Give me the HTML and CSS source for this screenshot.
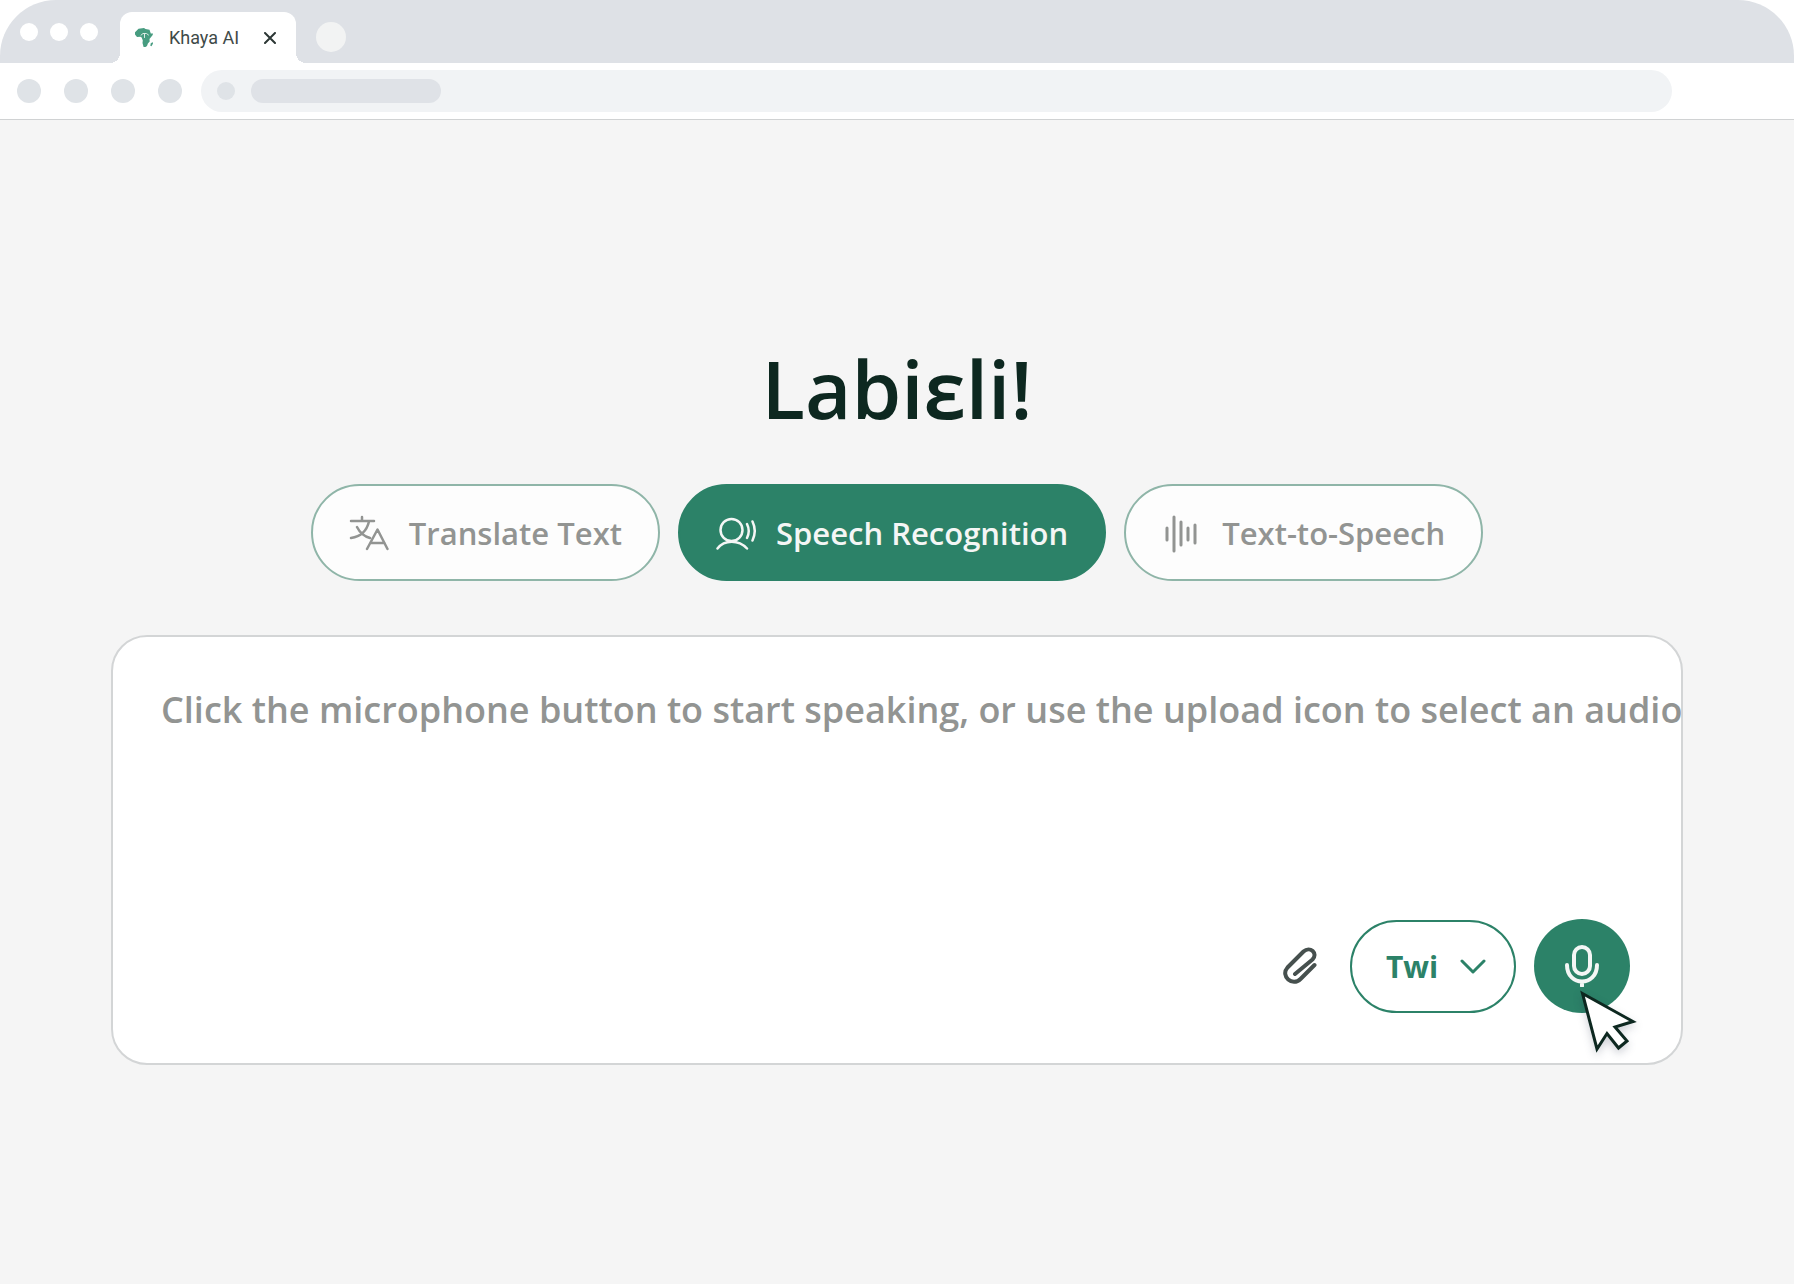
FILE: index.html
```html
<!DOCTYPE html>
<html lang="en">
<head>
    <meta charset="UTF-8">
    <meta name="viewport" content="width=device-width, initial-scale=1.0">
    <title>Khaya AI</title>
    <link rel="stylesheet" href="styles.css">
</head>
<body>
    <header class="browser">
        <div class="tab-strip">
            <div class="window-dots">
                <span></span><span></span><span></span>
            </div>
            <div class="tab">
                <svg class="favicon" viewBox="0 0 18 19" aria-hidden="true">
                    <path fill="#479c80" d="M3.500.8 9 0l1.500 1 4 .8 1.300 3.700H18l-.3 1.500-3.200 4 .2 2.500-1.800 2-.9 2.500-1.500 1H8.600L7.500 15l.3-2.500L6.700 9.500 5.500 8.700 2 9 0 6.500V4.200z"/>
                    <path fill="#479c80" d="m17.500 14 .5 1.500-1.500 2.700-1.200-.5.5-2.200z"/>
                    <path fill="none" stroke="#dcebe5" d="M6 7.200 8 5.500h3.500L13.500 7M9.500 6v3.500" stroke-width="1"/>
                </svg>
                <span class="tab-title">Khaya AI</span>
                <button class="tab-close" aria-label="Close tab">
                    <svg viewBox="0 0 12 12"><path d="M1 1 11 11M11 1 1 11"/></svg>
                </button>
            </div>
            <button class="new-tab" aria-label="New tab"></button>
        </div>
        <div class="toolbar">
            <div class="nav-dots">
                <span></span><span></span><span></span><span></span>
            </div>
            <div class="address-bar">
                <span class="site-icon"></span>
                <span class="site-url"></span>
            </div>
        </div>
    </header>

    <main class="page">
        <h1>Labiɛli!</h1>

        <nav class="modes">
            <button class="mode">
                <svg viewBox="0 0 40 40">
                    <path d="M2 8h23M13 4v4M20 8.500C18 17 12 23.500 2 25M8 14C11 20 15 23.500 21 25M18 36 28.500 16.500 38.500 36M21.500 30h14"/>
                </svg>
                Translate Text
            </button>
            <button class="mode active">
                <svg viewBox="0 0 40 40">
                    <circle cx="15.500" cy="17" r="11"/>
                    <path d="M1.500 35.500C8.500 26.500 22.500 26.500 31 35.500M31 11Q34.500 18 31 25M36.500 8.500Q41 18 36.500 27.500"/>
                </svg>
                Speech Recognition
            </button>
            <button class="mode">
                <svg viewBox="0 0 40 40">
                    <path class="bars" d="M5 15v12M12 4v34M19 9v23M26 15v12M33 12v18"/>
                </svg>
                Text-to-Speech
            </button>
        </nav>

        <section class="recorder">
            <input class="prompt" type="text" aria-label="Transcript" placeholder="Click the microphone button to start speaking, or use the upload icon to select an audio">
            <div class="actions">
                <button class="attach" aria-label="Upload audio">
                    <svg viewBox="0 0 34 38">
                        <path d="M31.500 18 17.500 32C9.500 40 -3 29 4.500 20.500L20.500 4.500C27 -1.500 35.500 6.500 29.500 12.500L12 27"/>
                    </svg>
                </button>
                <div class="language">
                    <select aria-label="Language">
                        <option>Twi</option>
                    </select>
                    <svg viewBox="0 0 26 16"><path d="M2 2 13 13 24 2"/></svg>
                </div>
                <div class="mic-wrap">
                    <button class="mic" aria-label="Start speaking">
                        <svg viewBox="0 0 34 42">
                            <rect x="9" y="2" width="16" height="27" rx="8"/>
                            <path d="M2 20C2 42 32 42 32 20M17 37v4"/>
                        </svg>
                    </button>
                    <svg class="cursor" viewBox="0 0 60 66">
                        <path d="M2.500 3.500 53 31.500 35 37 47 51 38.500 58 27 43.500 17 59z"/>
                    </svg>
                </div>
            </div>
        </section>
    </main>
</body>
</html>
```

FILE: styles.css
```css
* { margin: 0; padding: 0; box-sizing: border-box; }
body {
    min-height: 100vh;
    background: #f5f5f5;
    font-family: "Open Sans", "Noto Sans", sans-serif;
    font-weight: 600;
}
button, select, input { font: inherit; border: none; background: none; }
button { cursor: pointer; }
svg {
    display: block;
    fill: none;
    stroke: currentColor;
    stroke-width: 2;
    stroke-linecap: round;
    stroke-linejoin: round;
}

/* Browser chrome */
.browser {
    background: #fff;
    border-bottom: 1px solid #d0d2d3;
}
.tab-strip {
    display: flex;
    height: 63px;
    padding: 12px 20px 0;
    border-radius: 56px 56px 0 0;
    background: #dee1e6;
}
.window-dots {
    display: flex;
    gap: 12px;
    padding-top: 11px;
    width: 100px;
}
.window-dots span {
    width: 18px;
    height: 18px;
    border-radius: 50%;
    background: #fff;
}
.tab {
    position: relative;
    display: flex;
    align-items: center;
    width: 176px;
    padding: 0 20px 0 15px;
    border-radius: 12px 12px 0 0;
    background: #fff;
}
.tab::before, .tab::after {
    content: "";
    position: absolute;
    bottom: 0;
    width: 10px;
    height: 10px;
}
.tab::before { right: 100%; background: radial-gradient(circle at 0 0, #dee1e6 10px, #fff 10px); }
.tab::after { left: 100%; background: radial-gradient(circle at 100% 0, #dee1e6 10px, #fff 10px); }
.favicon {
    width: 18px;
    height: 19px;
    stroke: none;
}
.tab-title {
    margin-left: 16px;
    font-family: Roboto, sans-serif;
    font-size: 18px;
    font-weight: 400;
    color: #3f4a48;
}
.tab-close {
    margin-left: auto;
    color: #2c3735;
}
.tab-close svg { width: 12px; height: 12px; }
.new-tab {
    width: 30px;
    height: 30px;
    margin: 10px 0 0 20px;
    border-radius: 50%;
    background: #f2f3f3;
}
.toolbar {
    display: flex;
    align-items: center;
    height: 56px;
    padding: 0 122px 0 17px;
}
.nav-dots {
    display: flex;
    gap: 23px;
    margin-right: 19px;
}
.nav-dots span {
    width: 24px;
    height: 24px;
    border-radius: 50%;
    background: #dfe3e7;
}
.address-bar {
    display: flex;
    flex: 1;
    align-items: center;
    gap: 16px;
    height: 42px;
    padding: 0 16px;
    border-radius: 21px;
    background: #f1f3f5;
}
.site-icon {
    width: 18px;
    height: 18px;
    border-radius: 50%;
    background: #dfe3e7;
}
.site-url {
    width: 190px;
    height: 24px;
    border-radius: 12px;
    background: #dfe2e7;
}

/* Page */
.page { padding: 220px 111px 60px; }
h1 {
    font-size: 80px;
    line-height: 96px;
    font-weight: 600;
    text-align: center;
    color: #0d2820;
}
.modes {
    display: flex;
    justify-content: center;
    gap: 18px;
    margin: 48px 0 54px;
}
.mode {
    display: flex;
    align-items: center;
    gap: 20px;
    height: 97px;
    padding: 0 36px;
    border: 2px solid #8fb5a8;
    border-radius: 49px;
    background: #fdfdfd;
    color: #929492;
    font-size: 31px;
    white-space: nowrap;
}
.mode svg { width: 40px; height: 40px; stroke-width: 2.5; }
.mode .bars { stroke-width: 3; }
.mode.active {
    border-color: #2c8268;
    background: #2c8268;
    color: #f4f6f5;
}
.recorder {
    padding: 48px 0 50px 48px;
    border: 2px solid #d3d5d6;
    border-radius: 36px;
    background: #fff;
}
.prompt {
    display: block;
    width: 100%;
    height: 48px;
    font-size: 36px;
    color: #0d2820;
    outline: none;
}
.prompt::placeholder { color: #929492; opacity: 1; }
.actions {
    display: flex;
    justify-content: flex-end;
    align-items: center;
    gap: 18px;
    margin: 186px 51px 0 0;
}
.attach {
    margin-right: 15px;
    color: #46504e;
}
.attach svg { width: 34px; height: 38px; stroke-width: 4; }
.language {
    position: relative;
    color: #2c8268;
}
.language select {
    appearance: none;
    width: 166px;
    height: 93px;
    padding: 0 34px;
    border: 2px solid #2c8268;
    border-radius: 47px;
    color: inherit;
    font-size: 30px;
    font-weight: 700;
}
.language svg {
    position: absolute;
    top: 39px;
    right: 30px;
    width: 26px;
    height: 16px;
    stroke-width: 3;
    pointer-events: none;
}
.mic-wrap { position: relative; }
.mic {
    display: flex;
    align-items: center;
    justify-content: center;
    width: 96px;
    height: 94px;
    border-radius: 50%;
    background: #2c8268;
    color: #f4f6f5;
}
.mic svg { width: 34px; height: 42px; stroke-width: 4; }
.cursor {
    position: absolute;
    top: 71px;
    left: 46px;
    width: 60px;
    height: 66px;
    fill: #fff;
    stroke: #0d2820;
    stroke-width: 3;
    stroke-linejoin: miter;
    filter: drop-shadow(0 4px 4px rgba(20, 30, 60, 0.2));
    pointer-events: none;
}
```
